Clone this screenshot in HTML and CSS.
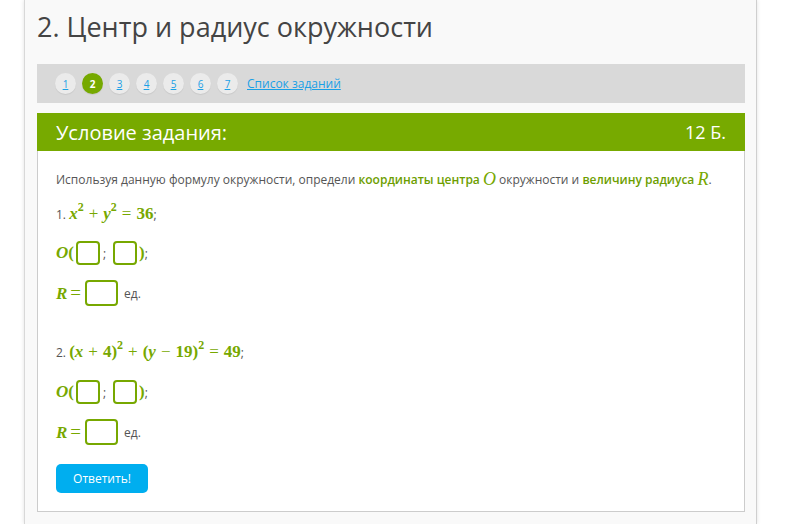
FILE: index.html
```html
<!DOCTYPE html>
<html lang="ru">
<head>
<meta charset="utf-8">
<title>Центр и радиус окружности</title>
<link rel="stylesheet" href="styles.css">
</head>
<body>
<div class="page">
  <h1 class="title">2. Центр и радиус окружности</h1>
  <nav class="nav">
    <a class="num" href="#">1</a>
    <span class="num active">2</span>
    <a class="num" href="#">3</a>
    <a class="num" href="#">4</a>
    <a class="num" href="#">5</a>
    <a class="num" href="#">6</a>
    <a class="num" href="#">7</a>
    <a class="list" href="#">Список заданий</a>
  </nav>
  <section class="card">
    <header class="card-head">
      <span class="card-title">Условие задания:</span>
      <span class="score">12 Б.</span>
    </header>
    <div class="card-body">
      <div class="row intro">Используя данную формулу окружности, определи&nbsp;<span class="hl">координаты центра</span>&nbsp;<span class="m mi">O</span>&nbsp;окружности и&nbsp;<span class="hl">величину радиуса</span>&nbsp;<span class="m mi">R</span>.</div>

      <div class="row r1">1.&nbsp;<span class="m"><span class="mi">x</span><sup>2</sup><span class="op">+</span><span class="mi">y</span><sup>2</sup><span class="op">=</span>36</span>;</div>
      <div class="row rO"><span class="m"><span class="mi">O</span>(</span><span class="box"></span>;<span class="box b2"></span><span class="m">)</span>;</div>
      <div class="row rR"><span class="m"><span class="mi">R</span><span class="op eq">=</span></span><span class="box wide"></span><span class="unit">ед.</span></div>

      <div class="row r2">2.&nbsp;<span class="m">(<span class="mi">x</span><span class="op">+</span>4)<sup>2</sup><span class="op">+</span>(<span class="mi">y</span><span class="op">−</span>19)<sup>2</sup><span class="op">=</span>49</span>;</div>
      <div class="row rO"><span class="m"><span class="mi">O</span>(</span><span class="box"></span>;<span class="box b2"></span><span class="m">)</span>;</div>
      <div class="row rR"><span class="m"><span class="mi">R</span><span class="op eq">=</span></span><span class="box wide"></span><span class="unit">ед.</span></div>

      <button class="btn" type="button">Ответить!</button>
    </div>
  </section>
</div>
</body>
</html>
```

FILE: styles.css
```css
html, body {
  margin: 0;
  padding: 0;
  background: #ffffff;
}
body {
  font-family: "Open Sans", "Noto Sans", sans-serif;
  color: #555;
  height: 524px;
  overflow: hidden;
}
.page {
  margin-left: 24px;
  width: 708px;
  min-height: 524px;
  background: #f9f9f9;
  border-left: 1px solid #d8d8d8;
  border-right: 1px solid #cfcfcf;
  box-shadow: 0 0 4px rgba(0, 0, 0, 0.12);
  padding: 0 11px 0 12px;
}
.title {
  margin: 0;
  padding-top: 12px;
  font-size: 27px;
  line-height: 30px;
  font-weight: 400;
  color: #444;
}
.nav {
  margin-top: 22px;
  height: 39px;
  background: #d9d9d9;
  display: flex;
  align-items: center;
  padding-left: 18px;
  gap: 6px;
}
.num {
  width: 21px;
  height: 21px;
  border-radius: 50%;
  background: #ebebeb;
  box-shadow: 0 1px 1px rgba(0, 0, 0, 0.08);
  display: flex;
  align-items: center;
  justify-content: center;
  font-size: 10px;
  color: #1aa0e6;
  text-decoration: underline;
}
.num.active {
  background: #76a900;
  color: #fff;
  font-weight: 700;
  text-decoration: none;
}
.list {
  margin-left: 3px;
  font-size: 12px;
  color: #1aa0e6;
  text-decoration: underline;
}
.card {
  margin-top: 10px;
}
.card-head {
  height: 38px;
  background: #77aa00;
  display: flex;
  align-items: center;
  justify-content: space-between;
  padding: 0 19px;
  color: #fff;
  font-size: 20px;
}
.score {
  font-size: 18px;
}
.card-body {
  background: #fff;
  border: 1px solid #ccc;
  border-top: none;
  padding: 18px 19px 18px 18px;
}
.row {
  display: flex;
  align-items: center;
  height: 30px;
  font-size: 12px;
  color: #555;
  white-space: nowrap;
}
.row.intro {
  height: 20px;
}
.r1 { margin-top: 10px; }
.rO { margin-top: 9px; }
.rR { margin-top: 10px; }
.r2 { margin-top: 29px; }
.rR + .r2 + .rO { margin-top: 10px; }
.hl {
  color: #6d9e00;
  font-weight: 600;
}
.m {
  font-family: "Liberation Serif", "DejaVu Serif", serif;
  font-weight: 700;
  color: #77a800;
  font-size: 17px;
}
.intro .m {
  font-size: 18px;
  font-weight: 400;
}
.mi {
  font-style: italic;
}
.m sup {
  font-size: 12px;
  vertical-align: 0;
  position: relative;
  top: -8px;
}
.op {
  margin: 0 5px;
  font-weight: 400;
}
.op.eq {
  margin: 0 2px 0 3px;
  font-size: 19px;
}
.box {
  display: inline-block;
  width: 20px;
  height: 20px;
  border: 2px solid #77a800;
  border-radius: 4px;
  background: #fff;
  margin: 0 3px 0 2px;
}
.box.b2 {
  margin: 0 2px 0 7px;
}
.box.wide {
  width: 29px;
  height: 22px;
  margin: 0 0 0 2px;
}
.unit {
  margin-left: 6px;
}
.btn {
  margin-top: 17px;
  display: block;
  width: 92px;
  height: 29px;
  border: none;
  border-radius: 5px;
  background: #00aeef;
  color: #fff;
  font-family: "Open Sans", sans-serif;
  font-size: 12px;
  padding: 0;
}
```
